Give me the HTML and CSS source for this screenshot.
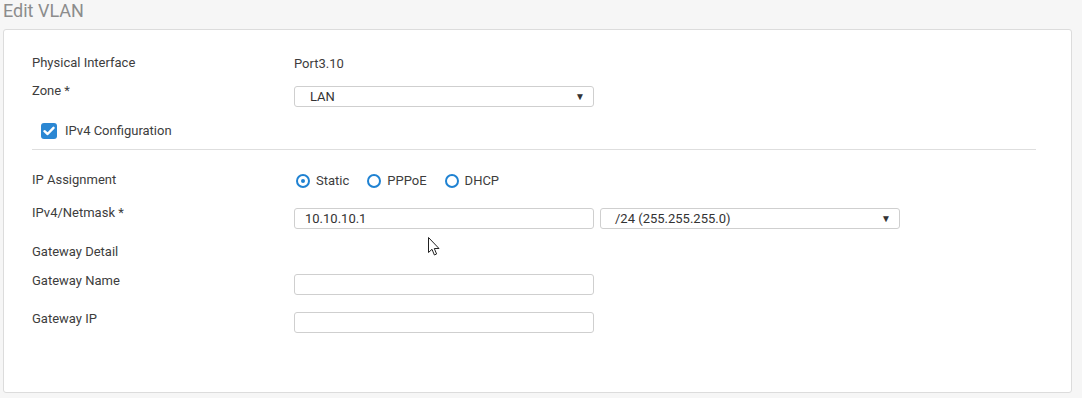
FILE: index.html
```html
<!DOCTYPE html>
<html lang="en">
<head>
  <meta charset="UTF-8">
  <title>Edit VLAN</title>
  <link rel="stylesheet" href="styles.css">
</head>
<body>
  <h1 class="page-title">Edit VLAN</h1>

  <div class="card">
    <div class="row row-physical">
      <div class="label">Physical Interface</div>
      <div class="value">Port3.10</div>
    </div>

    <div class="row row-zone">
      <div class="label">Zone *</div>
      <div class="field">
        <div class="select">LAN<span class="arrow">&#9660;</span></div>
      </div>
    </div>

    <div class="check-row">
      <span class="checkbox">
        <svg width="12" height="10" viewBox="0 0 12 10"><path d="M1.5 5.2 L4.6 8 L10.5 1.8" fill="none" stroke="#fff" stroke-width="2.4" stroke-linecap="round" stroke-linejoin="round"/></svg>
      </span>
      <span>IPv4 Configuration</span>
    </div>

    <div class="separator"></div>

    <div class="row row-assign">
      <div class="label">IP Assignment</div>
      <div class="radio-group">
        <span class="radio checked"></span><span class="radio-text">Static</span>
        <span class="radio"></span><span class="radio-text">PPPoE</span>
        <span class="radio"></span><span class="radio-text">DHCP</span>
      </div>
    </div>

    <div class="row row-ipv4">
      <div class="label">IPv4/Netmask *</div>
      <div class="field pair">
        <div class="input">10.10.10.1</div>
        <div class="select select-mask">/24 (255.255.255.0)<span class="arrow">&#9660;</span></div>
      </div>
    </div>

    <div class="row row-detail">
      <div class="label">Gateway Detail</div>
    </div>

    <div class="row row-gwname">
      <div class="label">Gateway Name</div>
      <div class="field"><div class="input"></div></div>
    </div>

    <div class="row row-gwip">
      <div class="label">Gateway IP</div>
      <div class="field"><div class="input"></div></div>
    </div>
  </div>

  <svg class="cursor" width="13" height="20" viewBox="0 0 13 20">
    <path d="M0.5 0.5 L0.5 15.5 L4 12.3 L6.4 18 L8.6 17 L6.3 11.5 L11 11.5 Z" fill="#fff" stroke="#222" stroke-width="1"/>
  </svg>
</body>
</html>
```

FILE: styles.css
```css
body {
  margin: 0;
  background: #f6f6f6;
  font-family: Roboto, "Liberation Sans", sans-serif;
  font-size: 13px;
  color: #3d3d3d;
  width: 1082px;
  height: 398px;
  overflow: hidden;
  position: relative;
}
.page-title {
  margin: 0;
  padding: 0 0 0 3px;
  height: 29px;
  font-size: 18px;
  font-weight: 400;
  line-height: 22px;
  color: #8c8c8c;
}
.card {
  margin: 0 10px 0 3px;
  height: 362px;
  background: #fff;
  border: 1px solid #dcdcdc;
  border-radius: 3px;
  padding: 0 35px 0 28px;
}
.row {
  display: grid;
  grid-template-columns: 262px 1fr;
  align-items: start;
  line-height: 16px;
}
.field { padding-top: 3px; }
.pair { display: flex; gap: 6px; }
.row-physical { margin-top: 25px; }
.row-zone { margin-top: 11px; }
.row-assign { margin-top: 22px; }
.row-ipv4 { margin-top: 16px; }
.row-detail { margin-top: 15px; }
.row-gwname { margin-top: 11px; }
.row-gwip { margin-top: 14px; }
.row-gwname .label, .row-gwip .label { padding-top: 2px; }
.value { padding-top: 1px; }

.select, .input {
  box-sizing: border-box;
  width: 300px;
  height: 21px;
  border: 1px solid #cfcfcf;
  border-radius: 3px;
  line-height: 19px;
  position: relative;
  color: #333;
}
.select { padding-left: 15px; }
.select-mask { padding-left: 14px; }
.input { padding-left: 10px; }
.arrow {
  position: absolute;
  right: 8px;
  top: 0;
  font-size: 10px;
  color: #333;
}

.check-row {
  margin: 16px 0 0 9px;
  display: flex;
  align-items: center;
  gap: 8px;
  height: 16px;
  line-height: 16px;
}
.checkbox {
  width: 16px;
  height: 16px;
  border-radius: 3px;
  background: #2b87d3;
  display: flex;
  align-items: center;
  justify-content: center;
}
.separator {
  margin-top: 10px;
  height: 1px;
  background: #dedede;
}

.radio-group {
  display: flex;
  align-items: center;
  padding-top: 1px;
  margin-left: 2px;
}
.radio {
  box-sizing: border-box;
  width: 14px;
  height: 14px;
  border: 2px solid #1f82d2;
  border-radius: 50%;
  position: relative;
}
.radio.checked::after {
  content: "";
  position: absolute;
  left: 3px;
  top: 3px;
  width: 4px;
  height: 4px;
  border-radius: 50%;
  background: #1f82d2;
}
.radio-text { margin: 0 18px 0 6px; }

.cursor {
  position: absolute;
  left: 428px;
  top: 237px;
}
```
